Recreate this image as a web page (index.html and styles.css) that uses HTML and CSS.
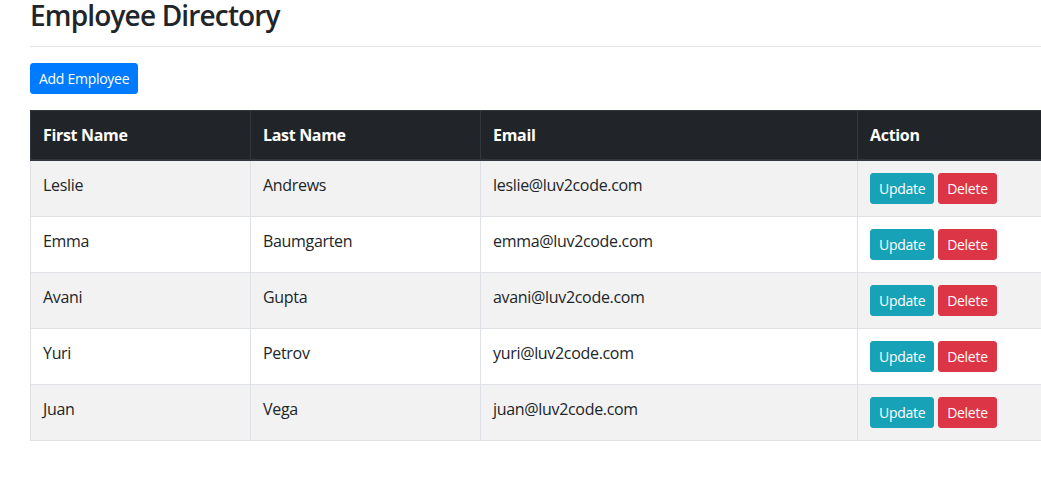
FILE: index.html
```html
<!DOCTYPE html>
<html lang="en">
<head>
<meta charset="utf-8">
<title>Employee Directory</title>
<link rel="stylesheet" href="styles.css">
</head>
<body>
<div class="container">
  <h3 class="title">Employee Directory</h3>
  <hr class="divider">
  <button class="btn btn-sm btn-primary">Add Employee</button>
  <table class="table">
    <colgroup>
      <col class="c1"><col class="c2"><col class="c3"><col class="c4">
    </colgroup>
    <thead>
      <tr><th>First Name</th><th>Last Name</th><th>Email</th><th>Action</th></tr>
    </thead>
    <tbody>
      <tr><td>Leslie</td><td>Andrews</td><td>leslie@luv2code.com</td><td><button class="btn btn-sm btn-info">Update</button> <button class="btn btn-sm btn-danger">Delete</button></td></tr>
      <tr><td>Emma</td><td>Baumgarten</td><td>emma@luv2code.com</td><td><button class="btn btn-sm btn-info">Update</button> <button class="btn btn-sm btn-danger">Delete</button></td></tr>
      <tr><td>Avani</td><td>Gupta</td><td>avani@luv2code.com</td><td><button class="btn btn-sm btn-info">Update</button> <button class="btn btn-sm btn-danger">Delete</button></td></tr>
      <tr><td>Yuri</td><td>Petrov</td><td>yuri@luv2code.com</td><td><button class="btn btn-sm btn-info">Update</button> <button class="btn btn-sm btn-danger">Delete</button></td></tr>
      <tr><td>Juan</td><td>Vega</td><td>juan@luv2code.com</td><td><button class="btn btn-sm btn-info">Update</button> <button class="btn btn-sm btn-danger">Delete</button></td></tr>
    </tbody>
  </table>
</div>
</body>
</html>
```
FILE: styles.css
```css
html, body {
  margin: 0;
  padding: 0;
  overflow-x: hidden;
  background: #fff;
}
body {
  font-family: "Open Sans", "Noto Sans", "Liberation Sans", sans-serif;
  font-size: 16px;
  line-height: 1.5;
  letter-spacing: -0.02em;
  color: #212529;
}
.container {
  padding-left: 30px;
  width: 1110px;
}
.title {
  margin: 0;
  font-size: 28px;
  font-weight: 600;
  letter-spacing: -0.03em;
  line-height: 30px;
  height: 34px;
}
.divider {
  margin: 12px 0 16px;
  border: 0;
  border-top: 1px solid rgba(0,0,0,.1);
}
.btn {
  display: inline-block;
  font-family: inherit;
  font-weight: 400;
  letter-spacing: -0.02em;
  color: #fff;
  text-align: center;
  vertical-align: middle;
  border: 1px solid transparent;
  cursor: pointer;
}
.btn-sm {
  padding: 4px 8px;
  font-size: 14px;
  line-height: 1.5;
  border-radius: 3px;
}
.btn-primary { background: #007bff; border-color: #007bff; }
.btn-info { background: #17a2b8; border-color: #17a2b8; }
.btn-danger { background: #dc3545; border-color: #dc3545; }
.table {
  margin-top: 16px;
  width: 1110px;
  border-collapse: collapse;
  table-layout: fixed;
  border: 1px solid #dee2e6;
}
.c1 { width: 220px; }
.c2 { width: 230px; }
.c3 { width: 377px; }
.c4 { width: 283px; }
.table th, .table td {
  padding: 12px;
  text-align: left;
  vertical-align: top;
  border: 1px solid #dee2e6;
}
.table thead th {
  background: #212529;
  color: #fff;
  font-weight: 700;
  border-color: #32383e;
  border-bottom: 2px solid #32383e;
}
.table tbody tr:nth-child(odd) {
  background: #f2f2f2;
}
```
